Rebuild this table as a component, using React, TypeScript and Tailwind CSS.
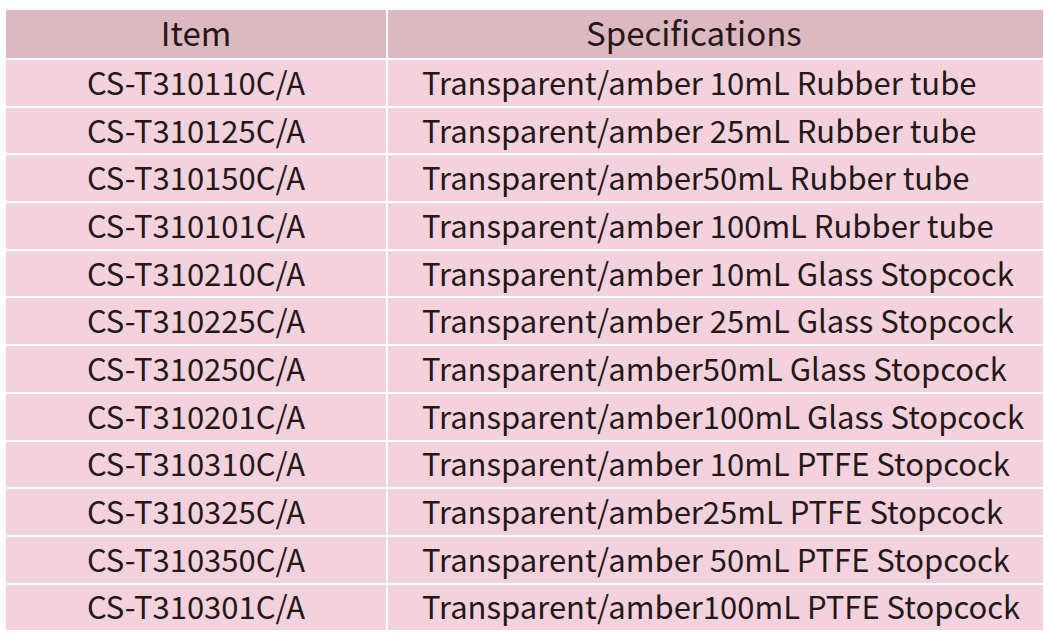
const rows: [string, string][] = [
  ['CS-T310110C/A', 'Transparent/amber 10mL Rubber tube'],
  ['CS-T310125C/A', 'Transparent/amber 25mL Rubber tube'],
  ['CS-T310150C/A', 'Transparent/amber50mL Rubber tube'],
  ['CS-T310101C/A', 'Transparent/amber 100mL Rubber tube'],
  ['CS-T310210C/A', 'Transparent/amber 10mL Glass Stopcock'],
  ['CS-T310225C/A', 'Transparent/amber 25mL Glass Stopcock'],
  ['CS-T310250C/A', 'Transparent/amber50mL Glass Stopcock'],
  ['CS-T310201C/A', 'Transparent/amber100mL Glass Stopcock'],
  ['CS-T310310C/A', 'Transparent/amber 10mL PTFE Stopcock'],
  ['CS-T310325C/A', 'Transparent/amber25mL PTFE Stopcock'],
  ['CS-T310350C/A', 'Transparent/amber 50mL PTFE Stopcock'],
  ['CS-T310301C/A', 'Transparent/amber100mL PTFE Stopcock'],
];

export default function App() {
  return (
    <div className="w-[1044px] h-[637px] bg-white pt-[10px] pl-[6px] font-['Noto_Sans_CJK_SC','Noto_Sans',sans-serif] text-[#231815]">
      <div className="w-[1037px] flex flex-col gap-[2px]">
        {/* Header */}
        <div className="flex gap-[2px] h-[48px] text-[33px] leading-none">
          <div className="w-[380px] bg-[#dcb9c0] flex items-center justify-center pb-[3px]">Item</div>
          <div className="flex-1 bg-[#dcb9c0] flex items-center pl-[198px] pb-[3px]">Specifications</div>
        </div>
        {rows.map(([item, spec]) => (
          <div key={item} className="flex gap-[2px] h-[45.7px] text-[31px] leading-none">
            <div className="w-[380px] bg-[#f3d2dd] flex items-center justify-center pb-[3px]">{item}</div>
            <div className="flex-1 bg-[#f3d2dd] flex items-center pl-[34px] pb-[3px]">{spec}</div>
          </div>
        ))}
      </div>
    </div>
  );
}
